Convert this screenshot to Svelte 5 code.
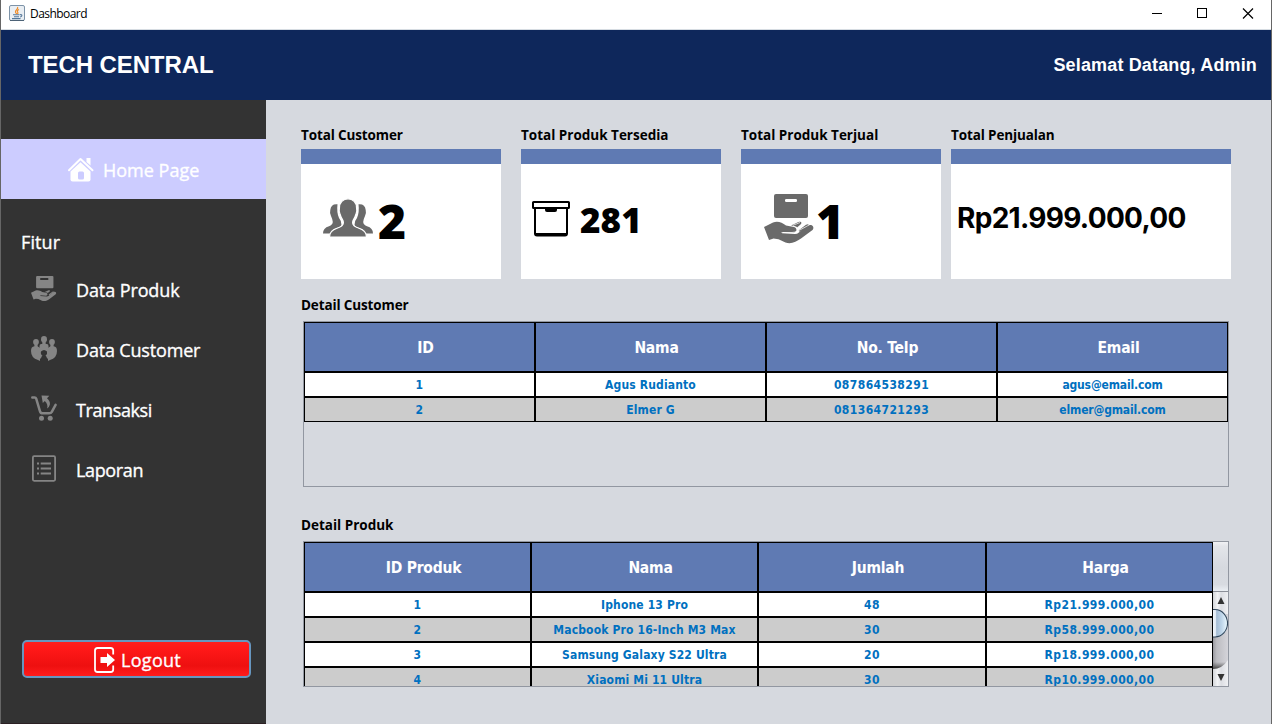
<script>
  const menu = [
    { icon: 'product', label: 'Data Produk', spacing: -0.1 },
    { icon: 'people', label: 'Data Customer', spacing: -0.17 },
    { icon: 'cart', label: 'Transaksi', spacing: -0.4 },
    { icon: 'report', label: 'Laporan', spacing: -0.35 }
  ];
  const customers = [
    ['1', 'Agus Rudianto', '087864538291', 'agus@email.com'],
    ['2', 'Elmer G', '081364721293', 'elmer@gmail.com']
  ];
  const products = [
    ['1', 'Iphone 13 Pro', '48', 'Rp21.999.000,00'],
    ['2', 'Macbook Pro 16-Inch M3 Max', '30', 'Rp58.999.000,00'],
    ['3', 'Samsung Galaxy S22 Ultra', '20', 'Rp18.999.000,00'],
    ['4', 'Xiaomi Mi 11 Ultra', '30', 'Rp10.999.000,00']
  ];
  const isNumeric = (text) => /^(Rp)?[\d.,]+$/.test(text);
</script>

{#snippet handBox()}
  <rect x="10" y="0" width="34" height="24" rx="2" fill="currentColor" />
  <path
    d="M0 33L9 28.5C14 26.8 18 28.6 22 31.5L30 33C33.5 34 33.2 38.3 29.5 38.5L19 38L18 39.3L31 40C34 40 36 37.5 38 35.7L44 31.5C48 29.5 51 33 48.5 36L37 44.5C32 48 27 50.5 21.500 48.500L14.500 45.300L9.500 44.500L5 46Z"
    fill="currentColor" />
  <path d="M27 31.500L34.500 28C37 27 38.500 29 36.500 30.500L33 33.500C32.500 32.500 30.500 31.800 27 31.500ZM34.500 36.500L42 30.700C44.500 29.500 45.500 30.500 44 32L36 38Z" fill="currentColor" />
{/snippet}

<div class="window">
  <div class="titlebar">
    <svg class="java" width="16" height="16" viewBox="0 0 16 16">
      <rect x=".5" y=".5" width="15" height="15" rx="1.500" fill="#e9eef3" stroke="#7d93a8" />
      <path d="M1 15.500H15" stroke="#4d6377" />
      <path d="M8.500 2C10 4 6 5 6.500 7C6.700 8 7.600 8.300 7.500 9M10 4.500C8 5.500 8 6.500 8.800 7.300C9.200 8 8.800 8.500 8.500 9" fill="none" stroke="#f08a24" stroke-width="1.200" />
      <path d="M4 9.800H10.500M5 11.700H10M3 13.600H11.500M11 9.800C13.500 9 13.500 11.500 11 12" fill="none" stroke="#55789a" stroke-width="1.100" />
    </svg>
    <span class="title">Dashboard</span>
    <svg class="controls" width="102" height="11" viewBox="0 0 102 11" shape-rendering="crispEdges">
      <path d="M0 5.500H10" stroke="#000" />
      <rect x="45.500" y=".5" width="9" height="9" fill="none" stroke="#000" />
      <path d="M91 0.500L101 10.500M101 .5L91 10.500" stroke="#000" stroke-width="1.200" shape-rendering="auto" />
    </svg>
  </div>
  <header>
    <h1>TECH CENTRAL</h1>
    <span class="welcome">Selamat Datang, Admin</span>
  </header>
  <div class="body">
    <aside>
      <div class="home">
        <svg width="26" height="26" viewBox="0 0 26 26">
          <path d="M18.500 1H22.500V8.500L18.500 5Z" fill="#fff" />
          <path d="M1 13.300L12.500 2L24.500 13.300" fill="none" stroke="#fff" stroke-width="2" stroke-linecap="round" stroke-linejoin="round" />
          <path d="M12.500 5.300L22.500 14.500V22.500Q22.500 24.500 20.500 24.500H4.500Q2.500 24.500 2.500 22.500V14.500Z" fill="#fff" />
          <rect x="10" y="14.500" width="6" height="8" rx="1.500" fill="#ccf" />
        </svg>
        <span>Home Page</span>
      </div>
      <div class="section">Fitur</div>
      <nav>
        {#each menu as item}
          <div class="item">
            {#if item.icon === 'product'}
              <svg class="gray" width="26" height="26" viewBox="0 0 51 51">
                {@render handBox()}
                <rect x="18" y="4" width="16" height="4" rx="1" fill="#333" />
              </svg>
            {:else if item.icon === 'people'}
              <svg class="gray" width="26" height="26" viewBox="0 0 26 26">
                <g fill="currentColor">
                  <ellipse cx="13" cy="3.200" rx="3" ry="3.200" />
                  <ellipse cx="5" cy="5.900" rx="2.900" ry="3" />
                  <ellipse cx="21" cy="5.900" rx="2.900" ry="3" />
                  <path d="M11.300 5H14.700V8H15.800Q17.500 8 17.500 10V14H8.500V10Q8.500 8 10.200 8H11.300Z" />
                  <path d="M3.400 8H6.600V10.200L9 12V25L7 24Q0 22 0 15Q0 10.500 3.400 10.200ZM19.400 8H22.600V10.200Q26 10.500 26 15Q26 22 19 24L17 25V12L19.400 10.200Z" />
                  <path d="M8.500 12H17.500V23L16 22.200Q15.500 20.200 14.500 19.800Q16.700 18.500 16 15.500Q13 12.500 10 15.500Q9.300 18.500 11.500 19.800Q10.500 20.200 10 22.200L8.500 23Z" />
                </g>
              </svg>
            {:else if item.icon === 'cart'}
              <svg class="gray" width="26" height="27" viewBox="0 0 26 27">
                <path d="M1.300 2.400H3.600Q4.800 2.400 5.200 3.600L9 16.300Q9.600 18.300 11.500 18.300H18.200Q20 18.300 20.800 16.800L24.600 9.800" fill="none" stroke="currentColor" stroke-width="2.500" stroke-linecap="round" stroke-linejoin="round" />
                <circle cx="10.500" cy="23.300" r="2.500" fill="currentColor" />
                <circle cx="19.200" cy="23.300" r="2.500" fill="currentColor" />
                <path d="M10.500 .5L18.300 .8L16 3.200Q19.300 6 18.900 9.500Q18.500 12 16 13.500Q17.500 9.500 13.800 5.900L11.800 8Z" fill="currentColor" />
              </svg>
            {:else}
              <svg class="gray" width="26" height="27" viewBox="0 0 26 27">
                <rect x="1.900" y="1.200" width="22.200" height="24.600" rx="1.200" fill="none" stroke="currentColor" stroke-width="1.800" />
                <path d="M9.700 8.500H20M9.700 13.500H20M9.700 18.500H20M6 8.500H8M6 13.500H8M6 18.500H8" stroke="currentColor" stroke-width="1.800" />
              </svg>
            {/if}
            <span style="letter-spacing: {item.spacing}px">{item.label}</span>
          </div>
        {/each}
      </nav>
      <button class="logout">
        <svg width="22" height="26" viewBox="0 0 22 26">
          <path d="M19.200 7.500V3.500Q19.200 1 16.700 1H3.500Q1 1 1 3.500V22.500Q1 25 3.500 25H16.700Q19.200 25 19.200 22.500V18.500" fill="none" stroke="#fff" stroke-width="1.800" />
          <path d="M6.500 10H13V6L21 13L13 20V16H6.500Z" fill="#fff" />
        </svg>
        <span>Logout</span>
      </button>
    </aside>
    <main>
      <section class="cards">
        <div class="card">
          <h2>Total Customer</h2>
          <div class="box c1">
            <svg width="50" height="38" viewBox="0 0 50 38">
              <g fill="#6a6a6a">
                <path d="M14.500 5.200Q8 4.500 7.300 11Q6.500 14 8 17Q9.500 20 9.800 23Q9.500 26 6 27.300Q0 29 0 34.500H7Q8 30.500 14 29Q18.500 27.500 18.500 26Q18.700 22 16 19Q13.500 13 14.500 5.200Z" />
                <path d="M35.500 5.200Q42 4.500 42.700 11Q43.500 14 42 17Q40.500 20 40.200 23Q40.500 26 44 27.300Q50 29 50 34.500H43Q42 30.500 36 29Q31.500 27.500 31.500 26Q31.300 22 34 19Q36.500 13 35.500 5.200Z" />
                <path d="M25 -.2C29.500 -.2 34 3.500 33.600 9.500C34.600 13.500 33 14.200 32.300 17C31.500 20 29.700 20.500 29.600 23.500C29.600 27 33 28.300 36 29.300C41 31 43.500 33.500 43.500 38H6.500C6.500 33.500 9 31 14 29.300C17 28.300 20.400 27 20.400 23.500C20.300 20.500 18.500 20 17.700 17C17 14.200 15.400 13.500 16.400 9.500C16 3.500 20.500 -.2 25 -.2Z" stroke="#fff" stroke-width="1.200" />
              </g>
            </svg>
            <span class="n big">2</span>
          </div>
        </div>
        <div class="card">
          <h2>Total Produk Tersedia</h2>
          <div class="box c2">
            <svg width="38" height="36" viewBox="0 0 38 36">
              <rect x="1" y="1" width="36" height="6" rx=".6" fill="#fff" stroke="#000" stroke-width="2" />
              <path d="M3 7V32.500Q3 34.500 5 34.500H33Q35 34.500 35 32.500V7" fill="none" stroke="#000" stroke-width="2" />
              <path d="M4 33.500H34" stroke="#000" stroke-width="3" />
              <path d="M13 7H25V9Q25 11 23 11H15Q13 11 13 9Z" />
            </svg>
            <span class="n mid">281</span>
          </div>
        </div>
        <div class="card">
          <h2>Total Produk Terjual</h2>
          <div class="box c3">
            <svg class="dark" width="51" height="51" viewBox="0 0 51 51">
              {@render handBox()}
              <rect x="21" y="5" width="12" height="3" rx="1.200" fill="#fff" />
              <path d="M17.500 38.500H28C34 38 35.500 35.500 32 33M29 31.300L36 28.500M34 37L45 31" fill="none" stroke="#fff" stroke-width=".7" />
            </svg>
            <span class="n big">1</span>
          </div>
        </div>
        <div class="card wide">
          <h2>Total Penjualan</h2>
          <div class="box c4"><span class="money">Rp21.999.000,00</span></div>
        </div>
      </section>

      <h2 class="d1">Detail Customer</h2>
      <div class="panel customers">
        <div class="grid">
          {#each ['ID', 'Nama', 'No. Telp', 'Email'] as h}<div class="th">{h}</div>{/each}
          {#each customers as row, i}
            {#each row as cell}<div class="td" class:odd={i % 2} class:num={isNumeric(cell)} class:mail={cell.includes('@')}>{cell}</div>{/each}
          {/each}
        </div>
      </div>

      <h2 class="d2">Detail Produk</h2>
      <div class="panel products">
        <div class="grid">
          {#each ['ID Produk', 'Nama', 'Jumlah', 'Harga'] as h}<div class="th">{h}</div>{/each}
          {#each products as row, i}
            {#each row as cell}<div class="td" class:odd={i % 2} class:num={isNumeric(cell)}>{cell}</div>{/each}
          {/each}
        </div>
        <svg class="scroll" width="15" height="144" viewBox="0 0 15 144">
          <defs>
            <linearGradient id="corner" x2="0" y2="1"><stop stop-color="#f1f2f5" /><stop offset=".08" stop-color="#e3e5ea" /><stop offset=".5" stop-color="#d6d9df" /><stop offset=".85" stop-color="#d8dbe1" /><stop offset="1" stop-color="#eef2f7" /></linearGradient>
            <linearGradient id="track"><stop stop-color="#9a9aa0" /><stop offset=".25" stop-color="#bcbcc1" /><stop offset="1" stop-color="#d4d4da" /></linearGradient>
            <linearGradient id="end" x2="0" y2="1"><stop stop-color="#555" stop-opacity="0" /><stop offset="1" stop-color="#444" /></linearGradient>
            <linearGradient id="arrow"><stop stop-color="#d3d5d9" /><stop offset=".3" stop-color="#f2f3f5" /><stop offset=".55" stop-color="#dcdee3" /><stop offset="1" stop-color="#eff0f3" /></linearGradient>
            <linearGradient id="thumb"><stop stop-color="#eef4fa" /><stop offset=".18" stop-color="#e2ebf4" /><stop offset=".25" stop-color="#a5bdd5" /><stop offset=".6" stop-color="#bfd6ea" /><stop offset="1" stop-color="#edfaff" /></linearGradient>
          </defs>
          <rect width="15" height="50" fill="url(#corner)" />
          <rect y="49" width="15" height="1" fill="#8b8f98" />
          <rect y="50" width="15" height="94" fill="url(#track)" />
          <rect y="50" width="15" height="22" fill="url(#arrow)" />
          <path d="M0 120H14L8 127H0Z" fill="url(#end)" />
          <path d="M0 127Q9 127 15 118V144H0Z" fill="url(#arrow)" />
          <path d="M0 67.500H3A11.500 13.700 0 0 1 3 95H0Z" fill="url(#thumb)" />
          <path d="M0 67.500H2A12.500 13.700 0 0 1 2 95H0" fill="none" stroke="#31475c" stroke-width="1.100" />
          <path d="M4.500 62L8 55L11.500 62ZM4.500 132L8 139L11.500 132Z" fill="#333" />
        </svg>
      </div>
    </main>
  </div>
</div>

<style>
  :global(body) { margin: 0; overflow: hidden; }
  * { box-sizing: border-box; }
  .window { width: 1272px; height: 724px; display: flex; flex-direction: column; border: solid #666; border-width: 0 1px; background: #d6d9df; font-family: 'Open Sans', 'Noto Sans', sans-serif; white-space: nowrap; }
  svg { display: block; flex: none; overflow: visible; }
  .titlebar { height: 30px; flex: none; display: flex; align-items: flex-start; background: #fff; border-bottom: 1px solid #d6dce2; padding: 0 17px 0 8px; }
  .java { margin-top: 5px; }
  .title { margin-left: 5px; font-size: 12px; line-height: 28px; letter-spacing: -.55px; color: #000; }
  .controls { margin: 8px 0 0 auto; }
  header { height: 70px; flex: none; background: #0e275b; color: #fff; display: flex; justify-content: space-between; align-items: center; padding: 0 14px 0 27px; font-family: 'Liberation Sans', sans-serif; font-weight: 700; }
  h1 { margin: 0; font-size: 24px; letter-spacing: -.1px; line-height: 70px; }
  .welcome { font-size: 18px; letter-spacing: .15px; }
  .body { flex: 1; display: flex; }
  aside { width: 265px; background: #333; color: #fff; padding-top: 39px; display: flex; flex-direction: column; font-size: 18px; font-weight: 400; -webkit-text-stroke: .35px #fff; border-bottom: 1px solid #2b2023; }
  .home { height: 60px; background: #ccf; display: flex; align-items: center; padding: 2px 0 0 67px; gap: 9px; }
  .section { margin: 31px 0 0 20px; line-height: 25px; letter-spacing: .1px; }
  nav { padding: 5px 0 0 30px; }
  .item { height: 60px; display: flex; align-items: center; gap: 19px; }
  .item svg { margin-top: -3px; }
  .gray { color: #858585; }
  .dark { color: #6a6a6a; }
  .logout { margin: 140px 0 0 21px; width: 229px; height: 38px; border: 2px solid #6796bf; border-radius: 5px; background: linear-gradient(#ff1e1e, #ff1818 20%, #ee1010 70%, #ff1c1c); color: #fff; font: inherit; display: flex; align-items: center; padding: 0 0 0 70px; gap: 5px; }
  .logout svg { margin-top: 1px; }
  .logout span { padding-top: 2px; letter-spacing: .3px; }
  main { flex: 1; padding: 25px 0 0 35px; }
  h2 { margin: 0; font-size: 13.500px; line-height: 20px; font-weight: 700; color: #000; }
  .cards { display: flex; }
  .card { width: 200px; margin-right: 20px; }
  .card:nth-child(3) { margin-right: 10px; }
  .card.wide { width: 280px; margin: 0; }
  .card:first-child h2, .wide h2, .d1 { letter-spacing: -.13px; }
  .box { margin-top: 4px; height: 130px; background: #fff; border-top: 15px solid #5f7ab3; display: flex; align-items: flex-start; color: #000; }
  .n { font-weight: 800; line-height: 1; }
  .big { font-size: 48px; margin-top: 33px; }
  .mid { font-size: 35px; margin-top: 38px; letter-spacing: .1px; }
  .c1 { padding-left: 22px; gap: 5px; }
  .c1 svg { margin-top: 35px; }
  .c2 { padding-left: 11px; gap: 10px; }
  .c2 svg { margin-top: 37px; }
  .c3 { padding-left: 23px; gap: 1px; }
  .c3 svg { margin-top: 30px; }
  .c4 { padding-left: 6px; }
  .money { font: 700 28px/1 Inter, sans-serif; margin-top: 40px; letter-spacing: -.7px; }
  .d1 { margin-top: 16px; }
  .d2 { margin-top: 28px; }
  .panel { margin: 6px 0 0 2px; width: 926px; border: 1px solid #9297a1; overflow: hidden; display: flex; align-items: flex-start; font-family: 'DejaVu Sans Condensed', 'DejaVu Sans', sans-serif; font-stretch: condensed; font-weight: 700; }
  .customers { height: 166px; }
  .products { height: 146px; }
  .grid { display: grid; }
  .customers .grid { grid-template-columns: repeat(4, 231px); }
  .products .grid { grid-template-columns: 227px 227px 228px 227px; }
  .th { height: 50px; border: 1px solid #000; background: #5f7ab3; color: #fff; font-size: 15.500px; letter-spacing: -.2px; line-height: 51px; text-align: center; padding-left: 12px; }
  .td { height: 25px; border: 1px solid #000; background: #fff; color: #0070c0; font-size: 12px; line-height: 25px; letter-spacing: .15px; text-align: center; }
  .td.num { letter-spacing: .42px; }
  .td.mail { letter-spacing: -.15px; }
  .td.odd { background: #ccc; }
</style>
